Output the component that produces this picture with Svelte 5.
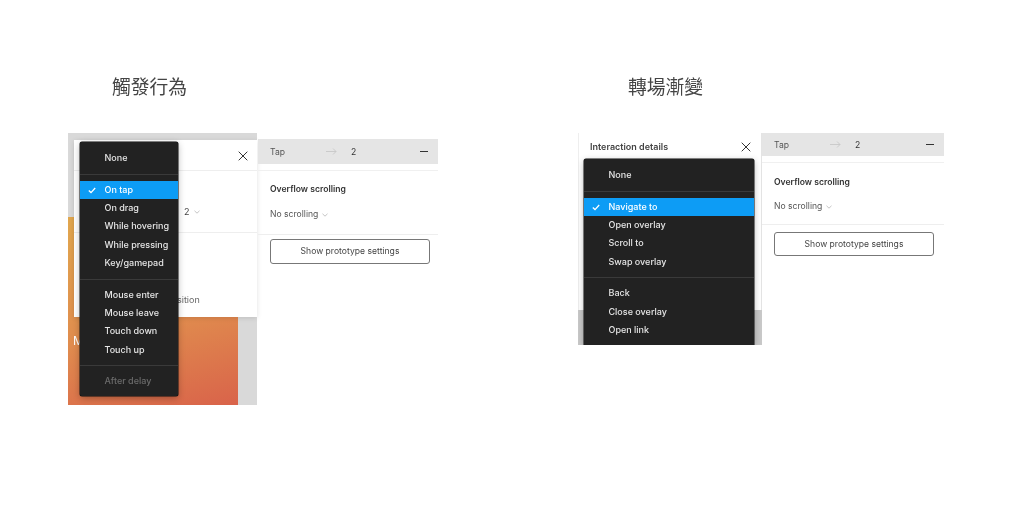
<script lang="ts">
  // Two annotated Figma prototype panels: trigger menu and action menu.
  type Row = { label: string; active?: boolean; muted?: boolean };

  const triggerMenu: Row[][] = [
    [{ label: "None" }],
    [
      { label: "On tap", active: true },
      { label: "On drag" },
      { label: "While hovering" },
      { label: "While pressing" },
      { label: "Key/gamepad" },
    ],
    [{ label: "Mouse enter" }, { label: "Mouse leave" }, { label: "Touch down" }, { label: "Touch up" }],
    [{ label: "After delay", muted: true }],
  ];

  const actionMenu: Row[][] = [
    [{ label: "None" }],
    [
      { label: "Navigate to", active: true },
      { label: "Open overlay" },
      { label: "Scroll to" },
      { label: "Swap overlay" },
    ],
    [{ label: "Back" }, { label: "Close overlay" }, { label: "Open link" }],
  ];
</script>

{#snippet menu(groups: Row[][], cls: string)}
  <div class="menu {cls}">
    {#each groups as group, i}
      {#if i > 0}<div class="sep"></div>{/if}
      {#each group as row}
        <div class="row" class:active={row.active} class:muted={row.muted}>
          {#if row.active}
            <svg class="check" width="8" height="7" viewBox="0 0 8 7"><path d="M.8 3.6 3 5.6 7.2 1" fill="none" stroke="#fff" stroke-width="1.3" /></svg>
          {/if}
          {row.label}
        </div>
      {/each}
    {/each}
  </div>
{/snippet}

{#snippet close(cls: string)}
  <svg class="close {cls}" width="10" height="10" viewBox="0 0 10 10"><path d="M.7.7l8.6 8.6M9.3.7.7 9.3" stroke="#333" stroke-width="1" fill="none" /></svg>
{/snippet}

{#snippet panel(cls: string)}
  <div class="panel {cls}">
    <div class="bar">
      <span class="tap">Tap</span>
      <svg class="arrow" width="11" height="7" viewBox="0 0 11 7"><path d="M0 3.5h10M7 .5l3 3-3 3" fill="none" stroke="#c4c4c4" stroke-width=".8" /></svg>
      <span class="dest">2</span>
      <span class="minus"></span>
    </div>
    <div class="section">
      <div class="heading">Overflow scrolling</div>
      <div class="select">
        No scrolling
        <svg width="6" height="4" viewBox="0 0 6 4"><path d="M.5.8 3 3.2 5.5.8" fill="none" stroke="#b5b5b5" stroke-width=".8" /></svg>
      </div>
    </div>
    <div class="button">Show prototype settings</div>
  </div>
{/snippet}

<div class="canvas">
  <h2 class="title left">觸發行為</h2>
  <h2 class="title right">轉場漸變</h2>

  <div class="figure fig-a">
    <div class="poster"><span class="poster-text">M</span></div>
    <div class="dialog dialog-a">
      <div class="d-line l1"></div>
      <div class="d-line l2"></div>
      <span class="d-two">2 <svg width="6" height="4" viewBox="0 0 6 4"><path d="M.5.8 3 3.2 5.5.8" fill="none" stroke="#b5b5b5" stroke-width=".8" /></svg></span>
      <span class="d-trans">sition</span>
    </div>
    {@render close("close-a")}
    {@render menu(triggerMenu, "menu-a")}
  </div>
  {@render panel("panel-a")}

  <div class="figure fig-b">
    <div class="dialog dialog-b">
      <div class="d-title">Interaction details</div>
    </div>
    {@render close("close-b")}
    {@render menu(actionMenu, "menu-b")}
  </div>
  {@render panel("panel-b")}
</div>

<style>
  :global(body) {
    margin: 0;
    background: #fff;
  }
  .canvas {
    position: relative;
    width: 1024px;
    height: 532px;
    overflow: hidden;
    background: #fff;
    font-family: Inter, "Liberation Sans", sans-serif;
    filter: blur(0.4px);
  }
  .title {
    position: absolute;
    top: 73px;
    margin: 0;
    font: 400 18.8px/26px "Noto Sans CJK TC", sans-serif;
    color: #444;
  }
  .title.left { left: 112px; }
  .title.right { left: 628px; }

  .figure {
    position: absolute;
    background: #d9d9d9;
    width: 189px;
  }
  .fig-a { left: 68px; top: 133px; height: 272px; }
  .fig-b { left: 578px; top: 133px; width: 184px; height: 212px; background: #c9c9c9; overflow: hidden; }

  .poster {
    position: absolute;
    left: 0;
    top: 84px;
    width: 170px;
    height: 188px;
    background: linear-gradient(165deg, #e1a74e 0%, #e08c4e 55%, #d9634a 100%);
  }
  .poster-text {
    position: absolute;
    left: 5px;
    top: 116px;
    color: #fff;
    font-size: 12px;
  }
  .dialog {
    position: absolute;
    background: #fff;
    box-shadow: 0 1px 5px rgba(0, 0, 0, 0.12);
  }
  .dialog-a { left: 6px; top: 7px; width: 183px; height: 177px; }
  .dialog-b { left: 0; top: 0; width: 184px; height: 177px; box-shadow: inset 1px 0 0 #eee, inset -1px 0 0 #e4e4e4; }
  .d-line {
    position: absolute;
    left: 0;
    right: 0;
    height: 1px;
    background: #eee;
  }
  .l1 { top: 30px; }
  .l2 { top: 92px; }
  .d-two {
    position: absolute;
    left: 110px;
    top: 66px;
    font-size: 9px;
    color: #444;
  }
  .d-two svg { margin: 0 0 1px 2px; }
  .d-trans {
    position: absolute;
    left: 103px;
    top: 154px;
    font-size: 9px;
    color: #666;
  }
  .d-title {
    padding: 8px 12px;
    font-size: 9px;
    line-height: 12px;
    font-weight: 600;
    color: #444;
  }
  .close { position: absolute; }
  .close-a { left: 170px; top: 18px; }
  .close-b { left: 163px; top: 9px; }

  .menu {
    position: absolute;
    box-sizing: border-box;
    padding: 7px 0 0;
    background: #222;
    border-radius: 2px;
    box-shadow: 0 0 0 0.5px #111, 0 2px 7px rgba(0, 0, 0, 0.3);
    color: #e6e6e6;
    font-size: 9px;
    font-weight: 500;
  }
  .menu-a { left: 12px; top: 9px; width: 98px; height: 254px; }
  .menu-b { left: 6px; top: 26px; width: 170px; height: 186px; border-radius: 2px 2px 0 0; }
  .row {
    position: relative;
    height: 18.3px;
    line-height: 18.3px;
    padding-left: 24.5px;
    white-space: nowrap;
  }
  .row.active { background: #0d9cf5; color: #fff; }
  .row.muted { color: #6b6b6b; }
  .check {
    position: absolute;
    left: 8px;
    top: 6px;
  }
  .sep {
    height: 1px;
    margin: 6.5px 0 6px;
    background: #3a3a3a;
  }

  .panel {
    position: absolute;
    display: flex;
    flex-direction: column;
    box-sizing: border-box;
    color: #333;
    font-size: 8.6px;
  }
  .panel-a { left: 258px; top: 139px; width: 180px; }
  .panel-b { left: 762px; top: 133px; width: 182px; }
  .bar {
    display: flex;
    align-items: center;
    height: 25px;
    padding: 0 10px 0 12px;
    background: #e5e5e5;
    color: #555;
  }
  .panel-b .bar { height: 23px; }
  .tap { width: 56px; }
  .arrow { margin-right: 14px; }
  .dest { flex: 1; color: #333; }
  .minus {
    width: 8px;
    height: 1px;
    background: #333;
  }
  .section {
    display: flex;
    flex-direction: column;
    gap: 14px;
    margin-top: 6px;
    padding: 13px 12px 14px;
    border-top: 1px solid #f0f0f0;
    border-bottom: 1px solid #eee;
  }
  .panel-b .section { gap: 13px; padding: 14px 12px 12px; }
  .heading {
    font-weight: 600;
    line-height: 11px;
    color: #333;
  }
  .select {
    display: flex;
    align-items: center;
    gap: 4px;
    line-height: 11px;
    color: #555;
  }
  .button {
    margin: 4px 8px 0 12px;
    height: 25px;
    line-height: 23px;
    box-sizing: border-box;
    border: 1px solid #777;
    border-radius: 3px;
    text-align: center;
    color: #444;
  }
  .panel-b .button { height: 24px; line-height: 22px; margin-right: 10px; margin-top: 7px; }
</style>
